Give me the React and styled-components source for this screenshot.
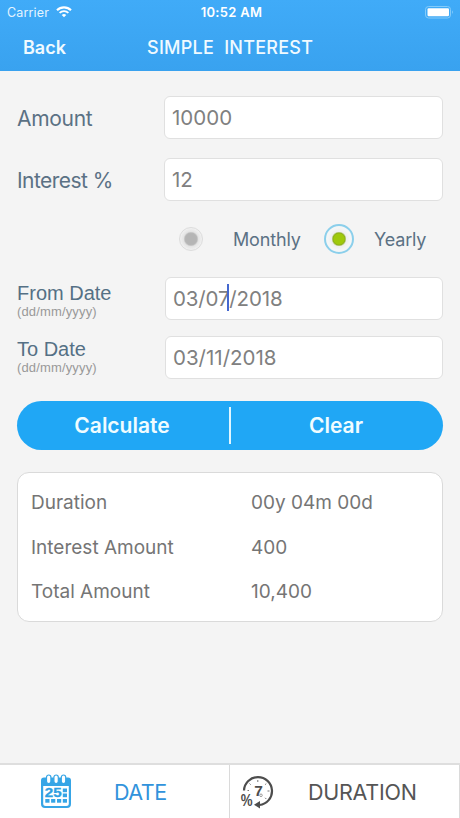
import React, { useState } from "react";
import styled, { createGlobalStyle } from "styled-components";

function App() {
  const [period, setPeriod] = useState("yearly");
  const [activeTab, setActiveTab] = useState("date");

  return (
    <Screen>
      <GlobalStyle />
      <Header>
        <StatusBar>
          <Carrier>
            Carrier
            <WifiIcon />
          </Carrier>
          <Clock>10:52 AM</Clock>
          <BatteryIcon />
        </StatusBar>
        <NavBar>
          <BackButton>Back</BackButton>
          <Title>SIMPLE&nbsp; INTEREST</Title>
        </NavBar>
      </Header>

      <Form>
        <Row>
          <Label $spacing="-0.3px">Amount</Label>
          <Field>10000</Field>
        </Row>
        <Row $top={16}>
          <Label $spacing="-0.55px">Interest %</Label>
          <Field>12</Field>
        </Row>
        <Periods>
          <Radio
            $active={period === "monthly"}
            onClick={() => setPeriod("monthly")}
          />
          <PeriodName $width={91}>Monthly</PeriodName>
          <Radio
            $active={period === "yearly"}
            onClick={() => setPeriod("yearly")}
          />
          <PeriodName>Yearly</PeriodName>
        </Periods>
        <Row $top={23}>
          <DateLabel $top={5}>
            From Date
            <small>(dd/mm/yyyy)</small>
          </DateLabel>
          <Field $date $spacing="-0.15px">
            03/07/2018
            <Caret />
          </Field>
        </Row>
        <Row $top={16}>
          <DateLabel $top={2}>
            To Date
            <small>(dd/mm/yyyy)</small>
          </DateLabel>
          <Field $date>03/11/2018</Field>
        </Row>
        <Actions>
          <Action>Calculate</Action>
          <Divider />
          <Action>Clear</Action>
        </Actions>
        <Results>
          <Result>
            <span>Duration</span>
            <span>00y 04m 00d</span>
          </Result>
          <Result>
            <span>Interest Amount</span>
            <span>400</span>
          </Result>
          <Result>
            <span>Total Amount</span>
            <span>10,400</span>
          </Result>
        </Results>
      </Form>

      <TabBar>
        <Tab $active={activeTab === "date"} onClick={() => setActiveTab("date")}>
          <CalendarIcon />
          <TabName $left={42} $spacing="-0.5px">DATE</TabName>
        </Tab>
        <Tab
          $active={activeTab === "duration"}
          onClick={() => setActiveTab("duration")}
        >
          <DurationIcon />
          <TabName $left={33} $spacing="-0.25px">DURATION</TabName>
        </Tab>
      </TabBar>
    </Screen>
  );
}

function WifiIcon() {
  return (
    <svg width="16" height="12" viewBox="0 0 16 12" fill="none">
      <path d="M1 4.3a9.9 9.9 0 0 1 14 0" stroke="#fff" strokeWidth="2.1" />
      <path d="M3.6 6.9a6.2 6.2 0 0 1 8.8 0" stroke="#fff" strokeWidth="1.8" />
      <path d="M8 11.3 5.7 9a3.3 3.3 0 0 1 4.6 0z" fill="#fff" />
    </svg>
  );
}

function BatteryIcon() {
  return (
    <svg width="29" height="13" viewBox="0 0 29 13">
      <rect
        x="0.5"
        y="0.5"
        width="25"
        height="11.5"
        rx="3"
        fill="none"
        stroke="#83cbfa"
      />
      <rect x="2.5" y="2.3" width="21.5" height="8" rx="1.2" fill="#fff" />
      <path d="M27 4.2q1.6 2 0 4z" fill="#a5dafb" />
    </svg>
  );
}

function CalendarIcon() {
  return (
    <svg width="32" height="35" viewBox="0 0 32 35">
      <path
        d="M4 3.5h24a3 3 0 0 1 3 3V30a4 4 0 0 1-4 4H5a4 4 0 0 1-4-4V6.5a3 3 0 0 1 3-3z"
        fill="#36a5e6"
      />
      <path
        d="M3.2 12h25.6v17.5a2.5 2.5 0 0 1-2.5 2.5H5.7a2.5 2.5 0 0 1-2.5-2.5z"
        fill="#fff"
      />
      <g fill="#fff" stroke="#36a5e6" strokeWidth="1.2">
        <rect x="6.5" y="1" width="4.4" height="8.5" rx="2.2" />
        <rect x="13.9" y="1" width="4.4" height="8.5" rx="2.2" />
        <rect x="21.3" y="1" width="4.4" height="8.5" rx="2.2" />
      </g>
      <text
        x="4.8"
        y="23"
        fontSize="12"
        fontWeight="700"
        textLength="16.8"
        lengthAdjust="spacingAndGlyphs"
        fontFamily="Liberation Sans, sans-serif"
        fill="#2e9fe2"
        stroke="#2e9fe2"
        strokeWidth="0.3"
      >
        25
      </text>
      <g fill="#36a5e6">
        <rect x="22.8" y="14.5" width="4.2" height="3.7" />
        <rect x="22.8" y="19.5" width="4.2" height="3.7" />
        <rect x="5.3" y="25" width="4.2" height="3.7" />
        <rect x="11.1" y="25" width="4.2" height="3.7" />
        <rect x="17" y="25" width="4.2" height="3.7" />
        <rect x="22.8" y="25" width="4.2" height="3.7" />
      </g>
    </svg>
  );
}

function DurationIcon() {
  return (
    <svg width="35" height="34" viewBox="0 0 35 34">
      <path
        d="M4 15.5A14 14 0 1 1 19.5 30"
        fill="none"
        stroke="#4d4d4d"
        strokeWidth="2.2"
      />
      <path d="M14 29.8 20 26v7.6z" fill="#4d4d4d" />
      <path
        d="M17.8 5v2M9.5 8.5l1.2 1.2M26.3 8.5l-1.2 1.2M7.5 15.5H9M29.5 16h-2M26.3 24l-1.2-1.2"
        stroke="#777"
        strokeWidth="1"
      />
      <text
        x="14.2"
        y="21.2"
        fontSize="15.5"
        fontWeight="700"
        fontFamily="Liberation Sans, sans-serif"
        fill="#4d4d4d"
      >
        7
      </text>
      <circle cx="21" cy="20.3" r="1.3" fill="none" stroke="#888" strokeWidth="0.8" />
      <text
        x="0.8"
        y="31.3"
        fontSize="16"
        fontWeight="700"
        textLength="11.8"
        lengthAdjust="spacingAndGlyphs"
        fontFamily="Liberation Sans, sans-serif"
        fill="#4d4d4d"
      >
        %
      </text>
    </svg>
  );
}

const GlobalStyle = createGlobalStyle`
  * {
    box-sizing: border-box;
  }
  body {
    margin: 0;
    font-family: Inter, "Liberation Sans", sans-serif;
  }
  button {
    padding: 0;
    border: none;
    background: none;
    font-family: inherit;
  }
`;
const Screen = styled.div`
  display: flex;
  flex-direction: column;
  width: 460px;
  height: 818px;
  background: #f4f4f4;
  overflow: hidden;
`;
const Header = styled.header`
  height: 71px;
  background: linear-gradient(#40abf8, #39a2ef);
  color: #fff;
`;
const StatusBar = styled.div`
  display: grid;
  grid-template-columns: 1fr auto 1fr;
  align-items: center;
  height: 24px;
  padding: 0 6px 0 7px;
  svg:last-child {
    justify-self: end;
  }
`;
const Carrier = styled.div`
  display: flex;
  align-items: center;
  gap: 7px;
  font-size: 12.5px;
  letter-spacing: 0.15px;
  color: #e4f4ff;
  svg {
    margin-bottom: 1px;
  }
`;
const Clock = styled.div`
  padding-left: 2px;
  font-size: 13px;
  font-weight: 600;
  letter-spacing: 0.3px;
`;
const NavBar = styled.div`
  display: flex;
  align-items: center;
  height: 46px;
  padding-left: 23px;
`;
const BackButton = styled.button`
  width: 124px;
  text-align: left;
  font-size: 18px;
  font-weight: 600;
  color: #f0faff;
`;
const Title = styled.div`
  font-size: 18px;
  font-weight: 500;
  letter-spacing: 0.25px;
  color: #f0faff;
`;
const Form = styled.main`
  flex: 1;
  padding: 25px 17px 0;
`;
const Row = styled.div`
  display: flex;
  justify-content: space-between;
  margin-top: ${(props) => props.$top || 0}px;
`;
const Label = styled.label`
  line-height: 46px;
  font-size: 21px;
  letter-spacing: ${(props) => props.$spacing};
  color: #5b7184;
`;
const DateLabel = styled.label`
  padding-top: ${(props) => props.$top}px;
  font-family: "Liberation Sans", Arial, sans-serif;
  font-size: 20px;
  line-height: 23px;
  color: #557085;
  small {
    display: block;
    font-size: 13px;
    line-height: 14px;
    letter-spacing: 0.15px;
    color: #999;
  }
`;
const Field = styled.div`
  position: relative;
  width: ${(props) => (props.$date ? 278 : 279)}px;
  height: 43px;
  padding-left: 7px;
  line-height: 41px;
  border: 1px solid #e0e0e0;
  border-radius: 6px;
  background: #fff;
  font-size: 20.5px;
  letter-spacing: ${(props) => props.$spacing || "normal"};
  color: #808080;
`;
const Caret = styled.span`
  position: absolute;
  top: 6px;
  left: 61px;
  width: 2px;
  height: 27px;
  background: #4468cf;
`;
const Periods = styled.div`
  display: flex;
  align-items: center;
  height: 30px;
  margin-top: 20px;
  padding-left: 159px;
`;
const Radio = styled.button`
  display: flex;
  align-items: center;
  justify-content: center;
  width: 30px;
  height: 30px;
  &::before {
    content: "";
    flex: none;
    box-sizing: border-box;
    width: ${(props) => (props.$active ? 30 : 24)}px;
    height: ${(props) => (props.$active ? 30 : 24)}px;
    border: ${(props) =>
      props.$active ? "2px solid #8bcfeb" : "1px solid #dcdcdc"};
    border-radius: 50%;
    background: ${(props) =>
      props.$active
        ? "radial-gradient(circle, #9fc90a 5px, #8daf1c 6px, #eee 7.5px, #f4f6f6 11px)"
        : "radial-gradient(circle, #b5b5b5 5px, #b8b8b8 6px, #e4e4e4 7.5px, #f1f1f1 11px)"};
  }
`;
const PeriodName = styled.span`
  width: ${(props) => (props.$width ? props.$width + "px" : "auto")};
  margin-left: ${(props) => (props.$width ? 27 : 20)}px;
  font-size: 18px;
  letter-spacing: -0.15px;
  color: #5b7184;
`;
const Actions = styled.div`
  display: flex;
  align-items: center;
  height: 49px;
  margin-top: 22px;
  border-radius: 25px;
  background: #20a7f5;
`;
const Action = styled.button`
  flex: 1;
  padding-right: 2px;
  font-size: 21px;
  font-weight: 600;
  color: #f0fcff;
`;
const Divider = styled.div`
  width: 2px;
  height: 37px;
  background: #e0f6ff;
`;
const Results = styled.div`
  display: flex;
  flex-direction: column;
  height: 150px;
  margin-top: 22px;
  padding: 8px 13px;
  border: 1px solid #dadada;
  border-radius: 12px;
  background: #fff;
`;
const Result = styled.div`
  display: grid;
  grid-template-columns: 220px 1fr;
  line-height: 44.7px;
  font-size: 19px;
  color: #757575;
`;
const TabBar = styled.nav`
  display: flex;
  height: 55px;
  border-top: 2px solid #dedede;
  background: #fff;
`;
const Tab = styled.button`
  display: flex;
  align-items: center;
  width: 230px;
  padding-left: ${(props) => (props.$active ? 40 : 10)}px;
  border-right: 1px solid #dadada;
  color: ${(props) => (props.$active ? "#3193dc" : "#555")};
`;
const TabName = styled.span`
  margin-left: ${(props) => props.$left}px;
  font-size: 21.5px;
  letter-spacing: ${(props) => props.$spacing};
`;

export default App;
